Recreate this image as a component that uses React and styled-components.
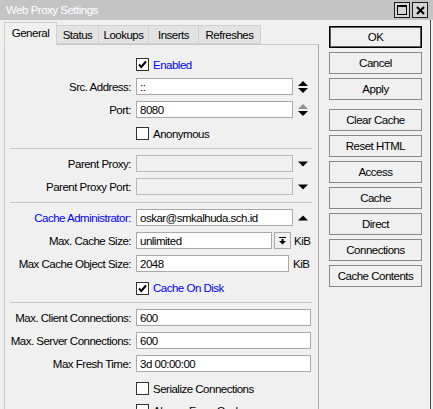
import React from 'react'
import styled, { createGlobalStyle } from 'styled-components'

const GlobalStyle = createGlobalStyle`
  * { box-sizing: border-box; }
  html, body {
    margin: 0;
    padding: 0;
    background: #f0f0f0;
  }
  body {
    font-family: "Liberation Sans", Arial, sans-serif;
    font-size: 11.5px;
    letter-spacing: -0.5px;
    color: #000;
  }
`

const Window = styled.div`
  width: 433px;
  height: 409px;
  overflow: hidden;
  background: #f0f0f0;
  display: flex;
  flex-direction: column;
`

const TitleBar = styled.div`
  flex: none;
  height: 20px;
  background: #c4c4c4;
  color: #fff;
  display: flex;
  align-items: center;
  padding: 0 5px 0 6px;
`

const Title = styled.div`
  flex: 1;
`

const TitleButtons = styled.div`
  display: flex;
  gap: 2px;
`

const TitleButton = styled.div`
  width: 16px;
  height: 16px;
  border: 1px solid #1e1e1e;
  background: #d6d6d6;
  display: flex;
  align-items: center;
  justify-content: center;
`

const Body = styled.div`
  flex: 1;
  min-height: 0;
  width: 431px;
  display: flex;
  border-right: 1px solid #4a4a4a;
`

const Main = styled.div`
  width: 315px;
  margin-left: 4px;
  padding-top: 2px;
  display: flex;
  flex-direction: column;
`

const TabStrip = styled.div`
  display: flex;
  align-items: flex-end;
  height: 22px;
`

const Tab = styled.div`
  width: ${p => p.$w}px;
  height: ${p => (p.$active ? 23 : 19)}px;
  margin-bottom: ${p => (p.$active ? -1 : 0)}px;
  margin-left: ${p => (p.$first ? 0 : -1)}px;
  position: relative;
  z-index: ${p => (p.$active ? 2 : 1)};
  border: 1px solid #d0d0d0;
  border-bottom: ${p => (p.$active ? 'none' : '1px solid #d0d0d0')};
  background: ${p => (p.$active ? '#f0f0f0' : '#e3e3e3')};
  display: flex;
  align-items: center;
  justify-content: center;
  padding-bottom: ${p => (p.$active ? 2 : 0)}px;
`

const Panel = styled.div`
  flex: 1;
  border: 1px solid #c8c8c8;
  border-right-color: #a8a8a8;
  background: #f0f0f0;
  padding-top: 7px;
  display: flex;
  flex-direction: column;
`

const Row = styled.div`
  display: grid;
  grid-template-columns: 126px auto;
  column-gap: 5px;
  align-items: center;
  height: 23px;
  padding-top: ${p => p.$pt || 0}px;
`

const Label = styled.div`
  text-align: right;
  white-space: nowrap;
  color: ${p => (p.$blue ? '#0000ff' : '#000')};
`

const Field = styled.div`
  display: flex;
  align-items: center;
`

const TextBox = styled.div`
  width: ${p => p.$w}px;
  height: 17px;
  border: 1px solid ${p => (p.$disabled ? '#b9b9b9' : '#a9a9a9')};
  background: ${p => (p.$disabled ? '#f0f0f0' : '#fff')};
  padding: 0 3px;
  display: flex;
  align-items: center;
  white-space: nowrap;
`

const SideIcon = styled.div`
  margin-left: 5px;
  width: 10px;
  display: flex;
  align-items: center;
`

const DropButton = styled.div`
  margin-left: 2px;
  width: 17px;
  height: 17px;
  border: 1px solid #a9a9a9;
  background: #f0f0f0;
  display: flex;
  align-items: center;
  justify-content: center;
`

const Unit = styled.span`
  margin-left: ${p => p.$ml}px;
`

const Check = styled.div`
  display: flex;
  align-items: center;
  gap: 4px;
  color: ${p => (p.$blue ? '#0000ff' : '#000')};
  white-space: nowrap;
`

const Box = styled.div`
  width: 13px;
  height: 13px;
  border: 1px solid #333;
  background: #fff;
  display: flex;
  align-items: center;
  justify-content: center;
`

const Separator = styled.div`
  height: 1px;
  background: #c6c6c6;
  margin: 4px 6px 3px 5px;
`

const Side = styled.div`
  width: 93px;
  margin-left: 10px;
  padding-top: 6px;
  display: flex;
  flex-direction: column;
  gap: 4px;
`

const Button = styled.button`
  height: 22px;
  margin: ${p => (p.$groupStart ? '5px 0 0' : 0)};
  padding: 0;
  font: inherit;
  letter-spacing: inherit;
  color: #000;
  background: #f0f0f0;
  border: 1px solid ${p => (p.$default ? '#000' : '#8a8a8a')};
  box-shadow: ${p => (p.$default ? 'inset 0 0 0 1px #5a5a5a' : 'none')};
`

const UpDown = ({ upColor = '#000' }) => (
  <svg width="10" height="14" viewBox="0 0 10 14">
    <polygon points="0,6 5,1 10,6" fill={upColor} />
    <polygon points="0,8 5,13 10,8" fill="#000" />
  </svg>
)

const Down = () => (
  <svg width="10" height="6" viewBox="0 0 10 6">
    <polygon points="0,0.5 10,0.5 5,5.5" fill="#000" />
  </svg>
)

const Up = () => (
  <svg width="10" height="6" viewBox="0 0 10 6">
    <polygon points="0,5.5 10,5.5 5,0.5" fill="#000" />
  </svg>
)

const BarDown = () => (
  <svg width="7" height="8" viewBox="0 0 7 8">
    <rect x="0" y="0" width="7" height="1" fill="#000" />
    <rect x="2.5" y="2" width="2" height="2" fill="#000" />
    <polygon points="0,4 7,4 3.5,7.5" fill="#000" />
  </svg>
)

const Tick = () => (
  <svg width="9" height="9" viewBox="0 0 9 9">
    <polyline points="1,4.5 3.3,7 8,1.5" fill="none" stroke="#000" strokeWidth="2" />
  </svg>
)

const CheckRow = ({ label, checked, blue, pt = 2 }) => (
  <Row $pt={pt}>
    <span />
    <Check $blue={blue}>
      <Box>{checked && <Tick />}</Box>
      {label}
    </Check>
  </Row>
)

const tabs = [
  { name: 'General', w: 53 },
  { name: 'Status', w: 43 },
  { name: 'Lookups', w: 51 },
  { name: 'Inserts', w: 51 },
  { name: 'Refreshes', w: 63 },
]

const buttons = [
  { label: 'OK', def: true },
  { label: 'Cancel' },
  { label: 'Apply' },
  { label: 'Clear Cache', group: true },
  { label: 'Reset HTML' },
  { label: 'Access' },
  { label: 'Cache' },
  { label: 'Direct' },
  { label: 'Connections' },
  { label: 'Cache Contents' },
]

export default function App() {
  return (
    <>
      <GlobalStyle />
      <Window>
        <TitleBar>
          <Title>Web Proxy Settings</Title>
          <TitleButtons>
            <TitleButton>
              <svg width="10" height="10" viewBox="0 0 10 10">
                <rect x="0.5" y="0.5" width="9" height="9" fill="none" stroke="#000" />
                <rect x="0" y="0" width="10" height="2" fill="#000" />
              </svg>
            </TitleButton>
            <TitleButton>
              <svg width="9" height="9" viewBox="0 0 9 9">
                <path d="M1 1 L8 8 M8 1 L1 8" stroke="#000" strokeWidth="2" />
              </svg>
            </TitleButton>
          </TitleButtons>
        </TitleBar>
        <Body>
          <Main>
            <TabStrip>
              {tabs.map((t, i) => (
                <Tab key={t.name} $w={t.w} $active={i === 0} $first={i === 0}>
                  {t.name}
                </Tab>
              ))}
            </TabStrip>
            <Panel>
              <CheckRow label="Enabled" checked blue />
              <Row>
                <Label>Src. Address:</Label>
                <Field>
                  <TextBox $w={157}>::</TextBox>
                  <SideIcon><UpDown /></SideIcon>
                </Field>
              </Row>
              <Row>
                <Label>Port:</Label>
                <Field>
                  <TextBox $w={157}>8080</TextBox>
                  <SideIcon><UpDown upColor="#8e968f" /></SideIcon>
                </Field>
              </Row>
              <CheckRow label="Anonymous" />
              <Separator />
              <Row>
                <Label>Parent Proxy:</Label>
                <Field>
                  <TextBox $w={157} $disabled />
                  <SideIcon><Down /></SideIcon>
                </Field>
              </Row>
              <Row>
                <Label>Parent Proxy Port:</Label>
                <Field>
                  <TextBox $w={157} $disabled />
                  <SideIcon><Down /></SideIcon>
                </Field>
              </Row>
              <Separator />
              <Row>
                <Label $blue>Cache Administrator:</Label>
                <Field>
                  <TextBox $w={157}>oskar@smkalhuda.sch.id</TextBox>
                  <SideIcon><Up /></SideIcon>
                </Field>
              </Row>
              <Row>
                <Label>Max. Cache Size:</Label>
                <Field>
                  <TextBox $w={136}>unlimited</TextBox>
                  <DropButton><BarDown /></DropButton>
                  <Unit $ml={3}>KiB</Unit>
                </Field>
              </Row>
              <Row>
                <Label>Max Cache Object Size:</Label>
                <Field>
                  <TextBox $w={153}>2048</TextBox>
                  <Unit $ml={4}>KiB</Unit>
                </Field>
              </Row>
              <CheckRow label="Cache On Disk" checked blue pt={3} />
              <Separator />
              <Row>
                <Label>Max. Client Connections:</Label>
                <Field><TextBox $w={175}>600</TextBox></Field>
              </Row>
              <Row>
                <Label>Max. Server Connections:</Label>
                <Field><TextBox $w={175}>600</TextBox></Field>
              </Row>
              <Row>
                <Label>Max Fresh Time:</Label>
                <Field><TextBox $w={175}>3d 00:00:00</TextBox></Field>
              </Row>
              <CheckRow label="Serialize Connections" pt={4} />
              <CheckRow label="Always From Cache" />
            </Panel>
          </Main>
          <Side>
            {buttons.map(b => (
              <Button key={b.label} $default={b.def} $groupStart={b.group}>
                {b.label}
              </Button>
            ))}
          </Side>
        </Body>
      </Window>
    </>
  )
}
